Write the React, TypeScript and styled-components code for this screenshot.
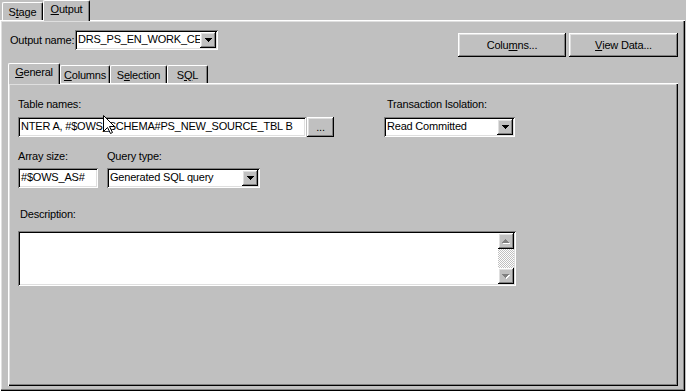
import React from 'react';
import styled, { createGlobalStyle, css } from 'styled-components';

const GlobalStyle = createGlobalStyle`
  html, body { margin: 0; padding: 0; background: #c0c0c0; }
  body {
    font-family: "Liberation Sans", Arial, sans-serif;
    font-size: 11px;
    letter-spacing: -0.2px;
    color: #000;
  }
  * { box-sizing: border-box; }
`;

const raised = css`
  box-shadow: inset -1px -1px #000, inset 1px 1px #fff, inset -2px -2px #808080, inset 2px 2px #dfdfdf;
`;
const sunken = css`
  box-shadow: inset 1px 1px #808080, inset -1px -1px #fff, inset 2px 2px #000, inset -2px -2px #dfdfdf;
`;
const panelEdge = css`
  box-shadow: inset 1px 1px #fff, inset -1px -1px #000, inset -2px -2px #808080, inset 2px 2px #dfdfdf;
`;

const Window = styled.div`
  position: relative;
  width: 686px;
  height: 391px;
  display: flex;
  flex-direction: column;
  overflow: hidden;
  background: #c0c0c0;
`;

const TabStrip = styled.div<{ $inset?: number }>`
  display: flex;
  align-items: flex-end;
  height: 20px;
  flex: none;
  padding-left: ${p => p.$inset ?? 0}px;
`;

const Tab = styled.div<{ $active?: boolean; $w: number }>`
  position: relative;
  z-index: ${p => (p.$active ? 2 : 1)};
  width: ${p => p.$w}px;
  height: ${p => (p.$active ? 21 : 18)}px;
  margin-bottom: ${p => (p.$active ? -1 : 0)}px;
  padding-top: ${p => (p.$active ? 2 : 3)}px;
  background: #c0c0c0;
  border-top: 1px solid #fff;
  border-left: 1px solid #fff;
  border-right: 1px solid #000;
  border-top-left-radius: 2px;
  border-top-right-radius: 2px;
  box-shadow: inset -1px 0 #808080;
  text-align: center;
  line-height: 13px;
  white-space: nowrap;
`;

const U = styled.span`
  text-decoration: underline;
  text-underline-offset: 1px;
`;

const OuterPanel = styled.div`
  width: 685px;
  flex: 1;
  display: flex;
  flex-direction: column;
  padding: 10px 7px 5px 8px;
  background: #c0c0c0;
  ${panelEdge}
`;

const HeaderRow = styled.div`
  height: 33px;
  flex: none;
  display: flex;
  justify-content: space-between;
  align-items: flex-start;
`;

const InlineGroup = styled.div`
  display: flex;
  align-items: center;
  height: 20px;
  padding-left: 2px;
`;

const InlineLabel = styled.div<{ $w: number }>`
  width: ${p => p.$w}px;
  line-height: 13px;
  white-space: nowrap;
`;

const ButtonGroup = styled.div`
  display: flex;
  gap: 3px;
  margin-top: 3px;
`;

const Button = styled.div<{ $w: number; $h: number }>`
  width: ${p => p.$w}px;
  height: ${p => p.$h}px;
  display: flex;
  align-items: center;
  justify-content: center;
  padding-top: 1px;
  line-height: 13px;
  background: #c0c0c0;
  white-space: nowrap;
  flex: none;
  ${raised}
`;

const InnerPanel = styled.div`
  flex: 1;
  display: flex;
  flex-direction: column;
  padding: 15px 10px 0 10px;
  background: #c0c0c0;
  ${panelEdge}
`;

const Row = styled.div<{ $top: number }>`
  display: flex;
  align-items: flex-start;
  margin-top: ${p => p.$top}px;
`;

const Group = styled.div<{ $left?: number }>`
  display: flex;
  flex-direction: column;
  margin-left: ${p => p.$left ?? 0}px;
`;

const Label = styled.div<{ $gap: number; $indent?: number }>`
  line-height: 13px;
  margin-bottom: ${p => p.$gap}px;
  padding-left: ${p => p.$indent ?? 0}px;
  white-space: nowrap;
`;

const Controls = styled.div`
  display: flex;
  gap: 1px;
`;

const Field = styled.div<{ $w: number }>`
  width: ${p => p.$w}px;
  height: 20px;
  padding: 3px 3px 0 3px;
  line-height: 13px;
  background: #fff;
  white-space: nowrap;
  overflow: hidden;
  ${sunken}
`;

const Combo = styled.div<{ $w: number }>`
  width: ${p => p.$w}px;
  height: 20px;
  padding: 2px;
  display: flex;
  background: #fff;
  flex: none;
  ${sunken}
`;

const ComboValue = styled.div`
  flex: 1;
  min-width: 0;
  overflow: hidden;
  white-space: nowrap;
  padding: 1px 0 0 1px;
  line-height: 13px;
`;

const DropButton = styled.div`
  width: 16px;
  height: 16px;
  flex: none;
  display: flex;
  align-items: center;
  justify-content: center;
  background: #c0c0c0;
  ${raised}
`;

const TextArea = styled.div`
  width: 498px;
  height: 55px;
  padding: 2px;
  display: flex;
  justify-content: flex-end;
  background: #fff;
  ${sunken}
`;

const ScrollBar = styled.div`
  width: 16px;
  display: flex;
  flex-direction: column;
  justify-content: space-between;
  background-color: #fff;
  background-image: conic-gradient(#c0c0c0 25%, #fff 0 50%, #c0c0c0 0 75%, #fff 0);
  background-size: 2px 2px;
`;

const ScrollButton = styled.div`
  width: 16px;
  height: 16px;
  display: flex;
  align-items: center;
  justify-content: center;
  background: #c0c0c0;
  ${raised}
`;

const Cursor = styled.svg`
  position: absolute;
  left: 103px;
  top: 115px;
  z-index: 5;
`;

const DownArrow: React.FC = () => (
  <svg width="7" height="4" viewBox="0 0 7 4">
    <path d="M0 0h7v1H6v1H5v1H4v1H3V3H2V2H1V1H0z" fill="#000" />
  </svg>
);

const DisabledArrow: React.FC<{ up?: boolean }> = ({ up }) => {
  const d = up
    ? 'M3 0h1v1h1v1h1v1h1v1H0V3h1V2h1V1h1z'
    : 'M0 0h7v1H6v1H5v1H4v1H3V3H2V2H1V1H0z';
  return (
    <svg width="8" height="5" viewBox="0 0 8 5">
      <path d={d} fill="#fff" transform="translate(1 1)" />
      <path d={d} fill="#808080" />
    </svg>
  );
};

const ComboBox: React.FC<{ w: number; value: string }> = ({ w, value }) => (
  <Combo $w={w}>
    <ComboValue>{value}</ComboValue>
    <DropButton>
      <DownArrow />
    </DropButton>
  </Combo>
);

export default function App() {
  return (
    <>
      <GlobalStyle />
      <Window>
        <TabStrip $inset={2}>
          <Tab $w={41}>
            S<U>t</U>age
          </Tab>
          <Tab $w={47} $active>
            <U>O</U>utput
          </Tab>
        </TabStrip>
        <OuterPanel>
          <HeaderRow>
            <InlineGroup>
              <InlineLabel $w={65}>Output name:</InlineLabel>
              <ComboBox w={143} value="DRS_PS_EN_WORK_CERT" />
            </InlineGroup>
            <ButtonGroup>
              <Button $w={108} $h={24}>
                Colu<U>m</U>ns...
              </Button>
              <Button $w={109} $h={24}>
                <U>V</U>iew Data...
              </Button>
            </ButtonGroup>
          </HeaderRow>
          <TabStrip>
            <Tab $w={52} $active>
              <U>G</U>eneral
            </Tab>
            <Tab $w={50}>
              <U>C</U>olumns
            </Tab>
            <Tab $w={57}>
              S<U>e</U>lection
            </Tab>
            <Tab $w={41}>
              S<U>Q</U>L
            </Tab>
          </TabStrip>
          <InnerPanel>
            <Row $top={0}>
              <Group>
                <Label $gap={6}>Table names:</Label>
                <Controls>
                  <Field $w={288}>NTER A, #$OWS_SCHEMA#PS_NEW_SOURCE_TBL B</Field>
                  <Button $w={27} $h={20}>...</Button>
                </Controls>
              </Group>
              <Group $left={50}>
                <Label $gap={6} $indent={3}>Transaction Isolation:</Label>
                <ComboBox w={131} value="Read Committed" />
              </Group>
            </Row>
            <Row $top={13}>
              <Group>
                <Label $gap={5}>Array size:</Label>
                <Field $w={80}>#$OWS_AS#</Field>
              </Group>
              <Group $left={9}>
                <Label $gap={5}>Query type:</Label>
                <ComboBox w={153} value="Generated SQL query" />
              </Group>
            </Row>
            <Row $top={20}>
              <Group>
                <Label $gap={10} $indent={2}>Description:</Label>
                <TextArea>
                  <ScrollBar>
                    <ScrollButton>
                      <DisabledArrow up />
                    </ScrollButton>
                    <ScrollButton>
                      <DisabledArrow />
                    </ScrollButton>
                  </ScrollBar>
                </TextArea>
              </Group>
            </Row>
          </InnerPanel>
        </OuterPanel>
        <Cursor width="13" height="20" viewBox="0 0 13 20">
          <polygon
            points="0.5,0.5 0.5,16.5 4.5,12.5 7.5,18.5 9.5,17.5 6.5,11.5 11.5,11.5"
            fill="#fff"
            stroke="#000"
            strokeWidth="1"
          />
        </Cursor>
      </Window>
    </>
  );
}
